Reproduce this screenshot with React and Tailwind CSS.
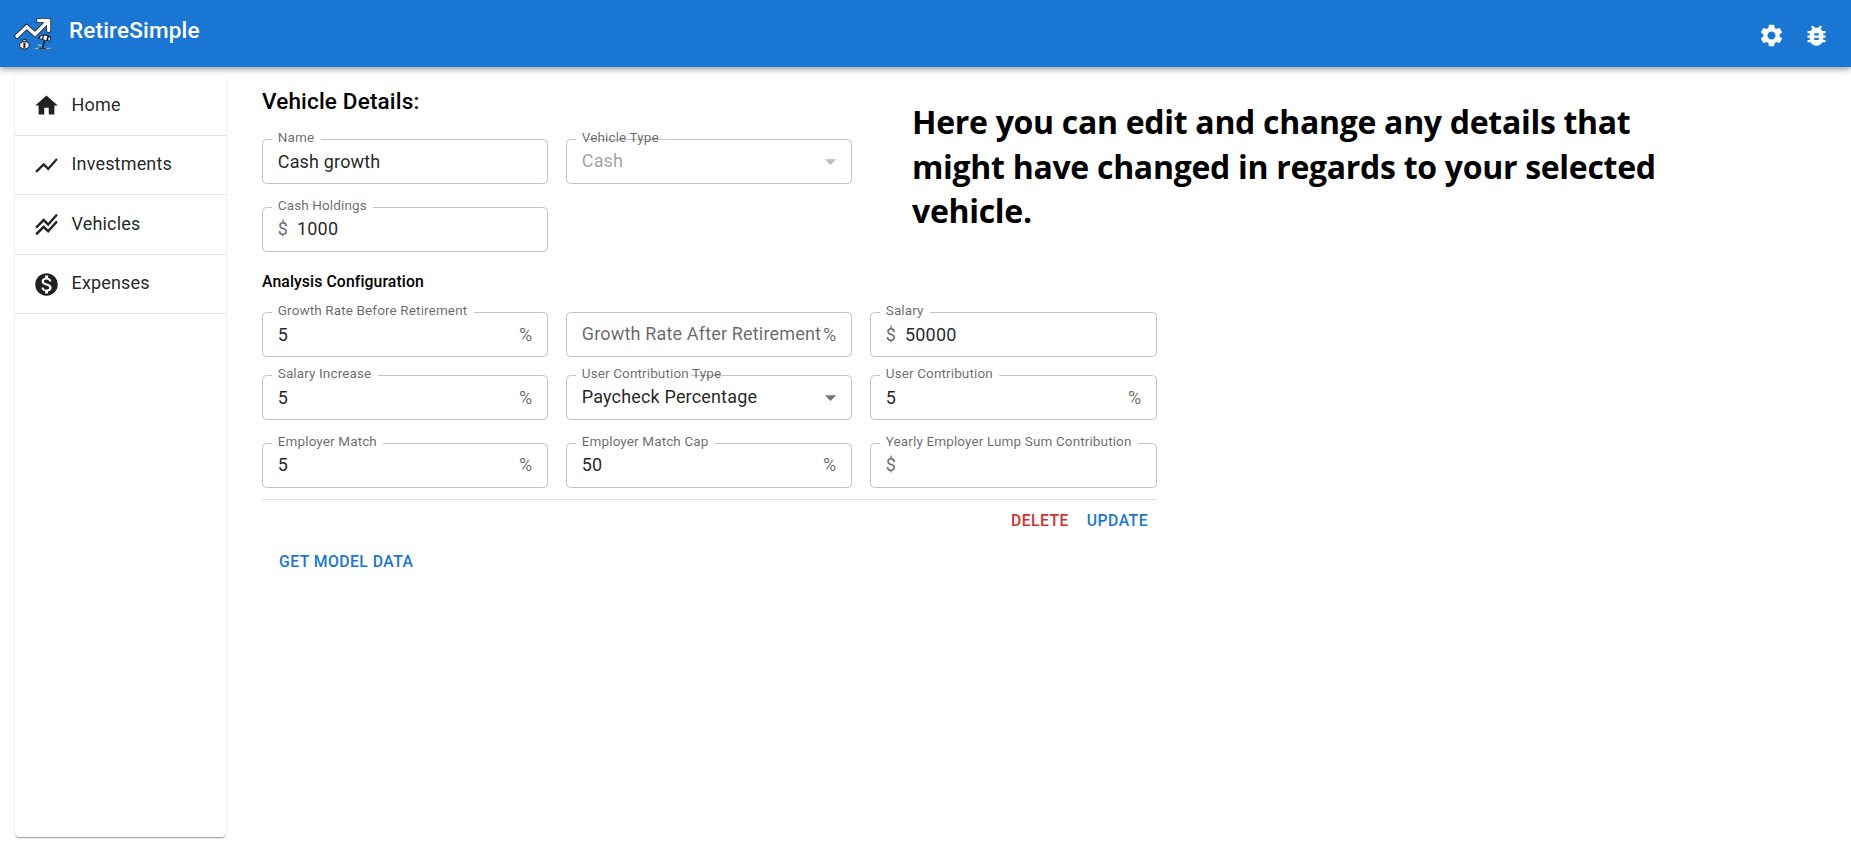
import React from "react";

const shadowBar = "shadow-[0_2px_4px_-1px_rgba(0,0,0,0.2),0_4px_5px_0_rgba(0,0,0,0.14),0_1px_10px_0_rgba(0,0,0,0.12)]";
const shadowPaper = "shadow-[0_2px_1px_-1px_rgba(0,0,0,0.2),0_1px_1px_0_rgba(0,0,0,0.14),0_1px_3px_0_rgba(0,0,0,0.12)]";

function Icon({ d, className }) {
  return (
    <svg viewBox="0 0 24 24" className={className} fill="currentColor">
      <path d={d} />
    </svg>
  );
}

const icons = {
  home: "M10 20v-6h4v6h5v-8h3L12 3 2 12h3v8z",
  chart: "m3.5 18.49 6-6.01 4 4L22 6.92l-1.41-1.41-7.09 7.97-4-4L2 16.99z",
  stacked: "M2 19.99l7.5-7.51 4 4 7.09-7.97L22 9.92l-8.5 9.56-4-4-6 6.01L2 19.99zm1.5-4.5l6-6.01 4 4L22 3.92l-1.41-1.41-7.09 7.97-4-4L2 13.99l1.5 1.5z",
  money: "M12 2C6.48 2 2 6.48 2 12s4.48 10 10 10 10-4.48 10-10S17.52 2 12 2zm1.41 16.09V20h-2.67v-1.93c-1.71-.36-3.16-1.46-3.27-3.4h1.96c.1 1.05.82 1.87 2.65 1.87 1.96 0 2.4-.98 2.4-1.59 0-.83-.44-1.61-2.67-2.14-2.48-.6-4.18-1.62-4.18-3.67 0-1.72 1.39-2.84 3.11-3.21V4h2.67v1.95c1.86.45 2.79 1.86 2.85 3.39H14.3c-.05-1.11-.64-1.87-2.22-1.87-1.5 0-2.4.68-2.4 1.64 0 .84.65 1.39 2.67 1.91s4.18 1.39 4.18 3.91c-.01 1.83-1.38 2.83-3.12 3.16z",
  gear: "M19.14 12.94c.04-.3.06-.61.06-.94 0-.32-.02-.64-.07-.94l2.03-1.58c.18-.14.23-.41.12-.61l-1.92-3.32c-.12-.22-.37-.29-.59-.22l-2.39.96c-.5-.38-1.03-.7-1.62-.94l-.36-2.54c-.04-.24-.24-.41-.48-.41h-3.84c-.24 0-.43.17-.47.41l-.36 2.54c-.59.24-1.13.57-1.62.94l-2.39-.96c-.22-.08-.47 0-.59.22L2.74 8.87c-.12.21-.08.47.12.61l2.03 1.58c-.05.3-.09.63-.09.94s.02.64.07.94l-2.03 1.58c-.18.14-.23.41-.12.61l1.92 3.32c.12.22.37.29.59.22l2.39-.96c.5.38 1.03.7 1.62.94l.36 2.54c.05.24.24.41.48.41h3.84c.24 0 .44-.17.47-.41l.36-2.54c.59-.24 1.13-.56 1.62-.94l2.39.96c.22.08.47 0 .59-.22l1.92-3.32c.12-.22.07-.47-.12-.61l-2.01-1.58zM12 15.6c-1.98 0-3.6-1.62-3.6-3.6s1.62-3.6 3.6-3.6 3.6 1.62 3.6 3.6-1.62 3.6-3.6 3.6z",
  bug: "M20 8h-2.81c-.45-.78-1.07-1.45-1.82-1.96L17 4.41 15.59 3l-2.17 2.17C12.96 5.06 12.49 5 12 5c-.49 0-.96.06-1.41.17L8.41 3 7 4.41l1.62 1.63C7.88 6.55 7.26 7.22 6.81 8H4v2h2.09c-.05.33-.09.66-.09 1v1H4v2h2v1c0 .34.04.67.09 1H4v2h2.81c1.04 1.79 2.97 3 5.19 3s4.15-1.21 5.19-3H20v-2h-2.09c.05-.33.09-.66.09-1v-1h2v-2h-2v-1c0-.34-.04-.67-.09-1H20V8zm-6 8h-4v-2h4v2zm0-4h-4v-2h4v2z",
};

function Logo() {
  const arrow = "M3 19.3 L12.7 9.8 L21 17.3 L33.5 4.8 M24.5 3.6 H34.6 V13.5";
  return (
    <svg viewBox="0 0 38 34" className="h-[34px] w-[38px]">
      <path d={arrow} fill="none" stroke="#101820" strokeWidth="5" strokeLinecap="round" />
      <path d={arrow} fill="none" stroke="#fff" strokeWidth="3.5" strokeLinecap="round" />
      <ellipse cx="10.4" cy="28.2" rx="4.8" ry="3.8" fill="#f2efe9" stroke="#101820" strokeWidth="1" />
      <path d="M8.4 22.6 H12.6 L11.8 24.8 H9.2 Z" fill="#d8d4cc" stroke="#101820" strokeWidth="0.9" />
      <path d="M10.4 25.8 V30.8" stroke="#101820" strokeWidth="2" />
      <path d="M23.6 21.6 C26 17 32 16.2 36.4 19.5 L36.6 24.8 Z" fill="#101820" />
      <path d="M25.6 21.3 L27.2 18.9 L28.8 18.5 L28 21.8 Z" fill="#fff" />
      <path d="M30.2 18.5 L33.4 19.1 L32.2 23.3 L29.2 22.2 Z" fill="#fff" />
      <path d="M34.6 20.2 L36 21 L35.6 23.8 L34.2 23.3 Z" fill="#fff" />
      <path d="M30.6 23.5 L28.6 31" stroke="#101820" strokeWidth="1.6" />
      <path d="M24 28 L27.5 28.5" stroke="#d8d4cc" strokeWidth="1" />
      <path d="M20.5 31.4 H36.8" stroke="#a9a49c" strokeWidth="1.3" />
      <path d="M25 31.4 H32" stroke="#3a3a3a" strokeWidth="1.3" />
    </svg>
  );
}

function NavItem({ icon, label }) {
  return (
    <a className="flex h-[59.5px] shrink-0 items-center gap-[11.5px] border-b border-black/12 pl-[18px] text-[rgba(0,0,0,0.87)]">
      <Icon d={icon} className="mt-[1px] size-[27px]" />
      <span className="mb-[2px] text-[18px] leading-[27px] tracking-[0.169px]">{label}</span>
    </a>
  );
}

function Field({ label, value, prefix, suffix, select, disabled, placeholder, raised, notch = "w-full" }) {
  return (
    <div className={`relative flex h-[45px] items-center rounded-[4.5px] border border-[#c4c4c4] px-[14.75px] text-[18px] tracking-[0.169px] text-[rgba(0,0,0,0.87)] ${raised ? "pb-[2px]" : ""}`}>
      {label && (
        <div className="absolute -top-[11px] left-[9px] h-4 pr-[6.5px] pl-[5.75px]">
          <div className={`absolute top-[10px] left-0 h-[2px] bg-white ${notch}`} />
          <span className="relative block text-[13.5px] leading-4 tracking-[0.127px] whitespace-nowrap text-black/60">{label}</span>
        </div>
      )}
      {prefix && <span className="mr-[9px] -mt-px text-black/60">{prefix}</span>}
      {placeholder && <span className="-mt-[2px] whitespace-nowrap text-black/60">{placeholder}</span>}
      <span className={disabled ? "-mt-[2px] text-black/38" : select ? "-mt-[2px]" : ""}>{value}</span>
      {suffix && <span className="-mt-px ml-auto text-black/60">{suffix}</span>}
      {select && (
        <svg viewBox="0 0 24 24" className={disabled ? "ml-auto -mr-[8px] size-[27px] text-black/26" : "ml-auto -mr-[8px] size-[27px] text-black/54"} fill="currentColor">
          <path d="M7 10l5 5 5-5z" />
        </svg>
      )}
    </div>
  );
}

export default function App() {
  return (
    <div className="flex h-[863px] w-[1851px] flex-col overflow-hidden bg-white font-[Roboto,sans-serif] text-black">
      <header className={`z-10 flex h-[67px] shrink-0 items-start bg-[#1976d2] pr-[21px] pl-[14px] text-white ${shadowBar}`}>
        <div className="mt-[17px]"><Logo /></div>
        <h1 className="mt-[13px] ml-[17px] text-[22.5px] leading-[35px] font-medium tracking-[0.169px]">RetireSimple</h1>
        <div className="mt-[22px] ml-auto flex gap-[18px]">
          <Icon d={icons.gear} className="size-[27px]" />
          <Icon d={icons.bug} className="size-[27px]" />
        </div>
      </header>

      <div className="flex items-start pt-[9px] pl-[15px]">
        <nav className={`flex h-[761px] w-[211px] shrink-0 flex-col rounded-[4.5px] bg-white ${shadowPaper}`}>
          <NavItem icon={icons.home} label="Home" />
          <NavItem icon={icons.chart} label="Investments" />
          <NavItem icon={icons.stacked} label="Vehicles" />
          <NavItem icon={icons.money} label="Expenses" />
        </nav>

        <main className="ml-[36px] flex flex-col">
          <section className="flex">
            <div className="w-[590px]">
              <h2 className="mt-[8px] h-[35px] text-[22.5px] leading-[35px] font-medium tracking-[0.169px]">Vehicle Details:</h2>
              <div className="mt-[20px] grid grid-cols-2 gap-x-[18px] gap-y-[23px]">
                <Field label="Name" value="Cash growth" />
                <Field label="Vehicle Type" value="Cash" select disabled notch="w-[11px]" />
                <Field label="Cash Holdings" prefix="$" value="1000" raised />
              </div>
            </div>
            <p className="mt-[24px] ml-[60px] h-[134px] font-['Open_Sans',sans-serif] text-[32px] leading-[44.6px] font-bold tracking-[-0.3px] whitespace-nowrap">
              Here you can edit and change any details that<br />
              might have changed in regards to your selected<br />
              vehicle.
            </p>
          </section>

          <h3 className="mt-[15px] h-[28px] text-[15.75px] leading-[29px] font-medium tracking-[0.112px]">Analysis Configuration</h3>
          <div className="mt-[17px] grid w-[895px] grid-cols-[286px_286px_287px] gap-x-[18px] border-b border-[#e0e0e0] pb-[11px]">
            <Field label="Growth Rate Before Retirement" value="5" suffix="%" />
            <Field placeholder="Growth Rate After Retirement" suffix="%" />
            <Field label="Salary" prefix="$" value="50000" />
            <div className="col-span-3 h-[18px]" />
            <Field label="Salary Increase" value="5" suffix="%" />
            <Field label="User Contribution Type" value="Paycheck Percentage" select notch="w-[115px]" />
            <Field label="User Contribution" value="5" suffix="%" />
            <div className="col-span-3 h-[23px]" />
            <Field label="Employer Match" value="5" suffix="%" raised />
            <Field label="Employer Match Cap" value="50" suffix="%" raised />
            <Field label="Yearly Employer Lump Sum Contribution" prefix="$" raised />
          </div>
          <div className="flex w-[895px] justify-end gap-[18px] pt-[6px] pr-[9px] text-[15.75px] leading-[29px] font-medium tracking-[0.45px]">
            <button className="text-[#d32f2f]">DELETE</button>
            <button className="text-[#1976d2]">UPDATE</button>
          </div>
          <button className="mt-[12px] ml-[17px] self-start text-[15.75px] leading-[29px] font-medium tracking-[0.45px] text-[#1976d2]">GET MODEL DATA</button>
        </main>
      </div>
    </div>
  );
}
